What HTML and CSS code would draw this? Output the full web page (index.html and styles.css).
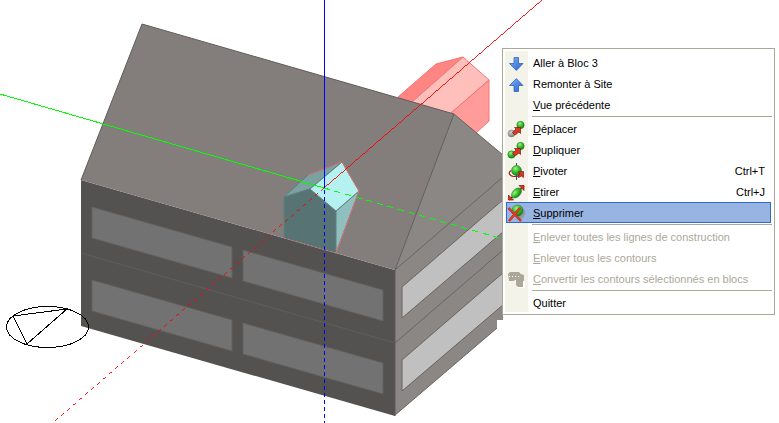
FILE: index.html
```
<!DOCTYPE html>
<html lang="fr">
<head>
  <meta charset="UTF-8" />
  <meta name="viewport" content="width=device-width, initial-scale=1.0"/>
  <title>Modeleur 3D</title>
  <link rel="stylesheet" href="styles.css">
</head>
<body>

  <main class="viewport">
    <!-- Vue 3D du bâtiment -->
    <svg class="scene" viewBox="0 0 779 423" role="img" aria-label="Vue 3D du bâtiment">
      <!-- Lucarne arrière -->
      <g stroke="#f27474" stroke-linejoin="round">
        <polygon fill="#ff8582" points="398,97 436,64 463,57 412,102"/>
        <polygon fill="#ffc0bb" points="412,102 463,57 489,80 450,114"/>
        <polygon fill="#ff9b98" points="450,114 489,80 489,121 476,133 454,118"/>
      </g>

      <!-- Pignon et façade droite -->
      <polygon fill="#8b8785" points="454,114 503,155 503,320 497,320 497,328 394,416 395,270"/>
      <g stroke="#686563" fill="none">
        <path d="M454 114L503 155M395 270L503 177M395 343L503 250M497 328L394 416"/>
        <polygon fill="#c0c0c0" points="402,287 504,199 504,231 402,318"/>
        <polygon fill="#c0c0c0" points="402,360 504,272 504,304 402,391"/>
      </g>

      <!-- Façade avant -->
      <polygon fill="#545250" points="81,180 395,270 395,416 81,326"/>
      <path stroke="#605e5c" d="M81 253L395 343"/>
      <g fill="#727272" stroke="#636160">
        <polygon points="92,207 232,247 232,278 92,238"/>
        <polygon points="243,250 383,290 383,321 243,281"/>
        <polygon points="92,280 232,320 232,351 92,311"/>
        <polygon points="243,323 383,363 383,394 243,354"/>
      </g>

      <!-- Toit -->
      <polygon fill="#837e7c" points="142,24 454,114 395,270 81,180"/>
      <path fill="none" stroke="#5f5c5b" d="M81 180L142 24L454 114L395 270V416"/>

      <!-- Lucarne avant -->
      <g stroke="#5f8080" stroke-linejoin="round">
        <polygon fill="#7ba2a0" points="284,197 308,175 342,162 310,189"/>
        <polygon fill="#577373" points="284,197 310,189 336,211 336,253 284,238"/>
        <polygon fill="#90bfbf" points="359,191 336,253 336,211"/>
        <polygon fill="#b4f1f0" points="342,162 359,191 336,211 310,189"/>
      </g>
      <path fill="none" stroke="#e07070" d="M308 175L342 162L359 191L336 253"/>
      <path fill="none" stroke="#e07070" stroke-dasharray="2 2" d="M336 253L284 238"/>

      <!-- Axes X, Y, Z -->
      <g fill="none" shape-rendering="crispEdges">
        <path stroke="#00ff00" d="M0 94L324 188"/>
        <path stroke="#00ff00" stroke-dasharray="6 5" d="M324 188L503 239"/>
        <path stroke="#ff0000" stroke-width=".9" d="M324 188L542 0"/>
        <path stroke="#ff0000" stroke-width=".9" stroke-dasharray="4 4" d="M324 188L55 421"/>
        <path stroke="#0000ff" d="M324.500 0V188"/>
        <path stroke="#0000ff" stroke-dasharray="4 3" d="M324.500 190V423"/>
      </g>

      <!-- Boussole -->
      <g fill="none" stroke="#000" shape-rendering="crispEdges">
        <ellipse cx="47.500" cy="327" rx="41" ry="20.500"/>
        <polygon points="13,316 67,309 27,344"/>
      </g>
    </svg>

    <!-- Menu contextuel -->
    <ul class="menu">
      <li>
        <button class="item">
          <svg class="icon" viewBox="0 0 20 19"><path fill="url(#blue)" stroke="#2858b4" stroke-width=".7" d="M7 3.500h4.500V9.500h4.500L9.300 16.500L2.500 9.500H7z"/></svg>
          <span>Aller à Bloc 3</span>
        </button>
      </li>
      <li>
        <button class="item">
          <svg class="icon" viewBox="0 0 20 19"><path fill="url(#blue)" stroke="#2858b4" stroke-width=".7" d="M7 16.500h4.500V10.500h4.500L9.300 3.500L2.500 10.500H7z"/></svg>
          <span>Remonter à Site</span>
        </button>
      </li>
      <li><button class="item"><span class="label"><u>V</u>ue précédente</span></button></li>
      <li class="separator"></li>
      <li>
        <button class="item">
          <svg class="icon" viewBox="0 0 20 19">
            <circle cx="4.500" cy="13.500" r="3.500" fill="url(#gray)" stroke="#777" stroke-width=".5"/>
            <circle cx="13.500" cy="5" r="3.700" fill="url(#green)" stroke="#167816" stroke-width=".5"/>
            <path fill="#d83a24" stroke="#861208" stroke-width=".7" d="M5.500 12.500l3.500-3.500L7.500 7.500h6v6l-1.500-1.500l-4 3z"/>
          </svg>
          <span><u>D</u>éplacer</span>
        </button>
      </li>
      <li>
        <button class="item">
          <svg class="icon" viewBox="0 0 20 19">
            <circle cx="4.500" cy="13.500" r="3.700" fill="url(#green)" stroke="#167816" stroke-width=".5"/>
            <circle cx="13.500" cy="5" r="3.700" fill="url(#green)" stroke="#167816" stroke-width=".5"/>
            <path fill="#d83a24" stroke="#861208" stroke-width=".7" d="M5.500 12.500l3.500-3.500L7.500 7.500h6v6l-1.500-1.500l-4 3z"/>
          </svg>
          <span><u>D</u>upliquer</span>
        </button>
      </li>
      <li>
        <button class="item">
          <svg class="icon" viewBox="0 0 20 19">
            <path stroke="#3446a0" d="M9.500 1v17"/>
            <circle cx="9.500" cy="8.500" r="5" fill="url(#green)" stroke="#167816" stroke-width=".5"/>
            <path fill="none" stroke="#a31c10" stroke-width="1.200" d="M4 8.500C1 10.500 2 14 7 14.500q4 .2 6-1.200"/>
            <path fill="#d83a24" stroke="#861208" stroke-width=".7" d="M11 10l5.500-.5v6l-2-1.500l-3 1.500v-2.500l1.500-1z"/>
          </svg>
          <span><u>P</u>ivoter</span>
          <kbd>Ctrl+T</kbd>
        </button>
      </li>
      <li>
        <button class="item">
          <svg class="icon" viewBox="0 0 20 19">
            <path stroke="#a31c10" stroke-width="1.500" d="M2 17L17 3"/>
            <ellipse cx="9.500" cy="10" rx="6" ry="3.800" transform="rotate(-45 9.500 10)" fill="url(#green)" stroke="#167816" stroke-width=".5"/>
            <path fill="#d83a24" stroke="#861208" stroke-width=".7" d="M12 2.500h5v5zM1.500 12v5h5z"/>
          </svg>
          <span><u>E</u>tirer</span>
          <kbd>Ctrl+J</kbd>
        </button>
      </li>
      <li>
        <button class="item selected">
          <svg class="icon" viewBox="0 0 20 19">
            <path fill="#8f9aa5" d="M14 4q5 1 4 6q-1 5-6 5L9 14z"/>
            <circle cx="10.500" cy="6.500" r="5.500" fill="url(#green)" stroke="#167816" stroke-width=".5"/>
            <path fill="none" stroke="#a02a20" stroke-width="2.400" d="M1.500 4L14 17M13 4L2 17"/>
            <path fill="none" stroke="#e63a20" stroke-width="1.800" d="M1.500 4L14 17M13 4L2 17"/>
          </svg>
          <span><u>S</u>upprimer</span>
        </button>
      </li>
      <li class="separator"></li>
      <li><button class="item" disabled><span class="label"><u>E</u>nlever toutes les lignes de construction</span></button></li>
      <li><button class="item" disabled><span class="label"><u>E</u>nlever tous les contours</span></button></li>
      <li>
        <button class="item" disabled>
          <svg class="icon" viewBox="0 0 20 19">
            <path fill="#fff" d="M3 3l8-1l6 3v6l1 1v6h-7l-3-7l-7-1z"/>
            <path fill="#aca899" d="M1 4l2-2h9l2 2l3 1v6h-1v6h-5l-2-2v-5l-3 1H2z"/>
            <path stroke="#fff" stroke-dasharray="1 2" d="M2 6.500h10"/>
          </svg>
          <span><u>C</u>onvertir les contours sélectionnés en blocs</span>
        </button>
      </li>
      <li class="separator"></li>
      <li><button class="item"><span class="label">Quitter</span></button></li>
    </ul>
  </main>

  <!-- Dégradés partagés par les icônes -->
  <svg class="defs" aria-hidden="true">
    <linearGradient id="blue" x2="1" y2="1">
      <stop offset="0" stop-color="#7db4f8"/>
      <stop offset="1" stop-color="#2462cc"/>
    </linearGradient>
    <radialGradient id="green" cx=".4" cy=".3" r=".7">
      <stop offset="0" stop-color="#a2f08a"/>
      <stop offset=".5" stop-color="#3cc030"/>
      <stop offset="1" stop-color="#128018"/>
    </radialGradient>
    <radialGradient id="gray" cx=".4" cy=".3" r=".7">
      <stop offset="0" stop-color="#d0d0d0"/>
      <stop offset="1" stop-color="#808080"/>
    </radialGradient>
  </svg>
</body>
</html>
```
FILE: styles.css
```
/* Couleurs principales */
:root {
  --border: #aca899;
  --gutter: #f4f3ea;
  --select: #98b4e2;
  --select-border: #316ac5;
}

body {
  margin: 0;
  background: #fff;
  color: #000;
  font-family: Tahoma, "Liberation Sans", sans-serif;
  font-size: 11px;
}

.viewport {
  position: relative;
}

.scene {
  display: block;
  width: 100%;
}

/* Menu contextuel posé sur la vue */
.menu {
  position: absolute;
  top: 48px;
  left: 502px;
  box-sizing: border-box;
  width: 273px;
  margin: 0;
  padding: 3px 3px 1px;
  list-style: none;
  border: 1px solid var(--border);
  background: linear-gradient(var(--gutter), var(--gutter)) 2px 2px / 23px calc(100% - 4px) no-repeat #fff;
}

.item {
  display: grid;
  grid-template-columns: 20px 1fr auto;
  column-gap: 6px;
  align-items: center;
  box-sizing: border-box;
  width: 100%;
  height: 21px;
  padding: 0 5px 0 0;
  border: 1px solid transparent;
  background: none;
  color: inherit;
  font: inherit;
  line-height: 20px;
  text-align: left;
  white-space: nowrap;
}

.item.selected {
  border-color: var(--select-border);
  background: var(--select);
}

.item:disabled {
  color: var(--border);
}

.item kbd {
  font: inherit;
}

/* Entrée sans icône */
.label {
  grid-column: 2;
}

.icon {
  display: block;
  width: 20px;
  height: 19px;
}

.menu li {
  display: flex;
}

.menu .separator {
  height: 1px;
  margin: 1px -1px 1px 26px;
  background: var(--border);
}

.defs {
  position: absolute;
  width: 0;
  height: 0;
}
```
